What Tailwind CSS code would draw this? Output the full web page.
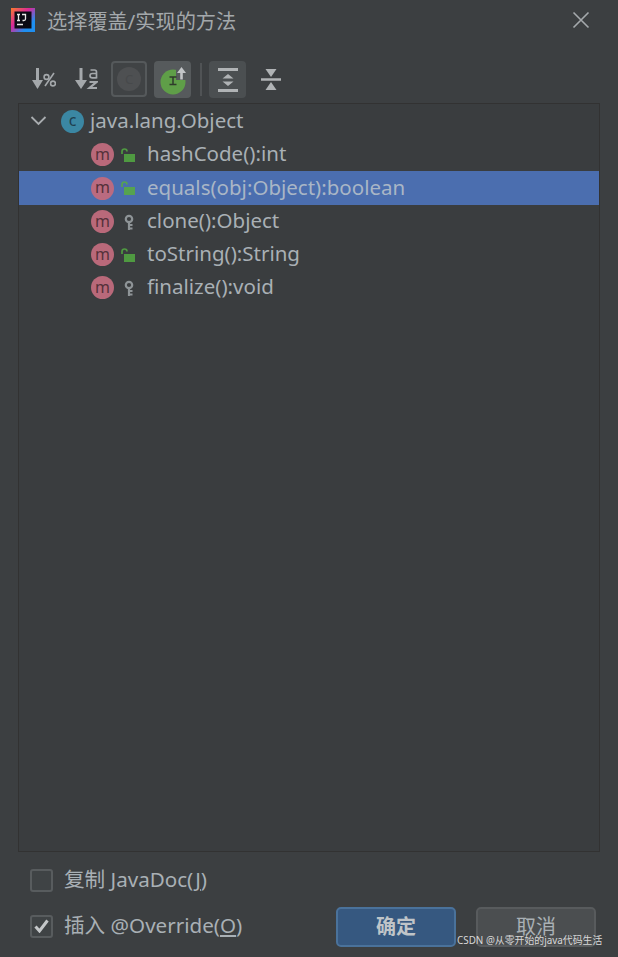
<!DOCTYPE html>
<html>
<head>
    <title>选择覆盖/实现的方法</title>
    <meta name="viewport" content="width=device-width, initial-scale=1.0">
    <script src="https://cdn.jsdelivr.net/npm/@tailwindcss/browser@4"></script>
</head>
<body class="bg-[#3c3f41] text-[#a9b0b5] font-['Noto_Sans','Noto_Sans_CJK_SC',sans-serif]">
    <div class="relative w-[618px] h-[957px] flex flex-col overflow-hidden">
        <!-- Title bar -->
        <header class="h-[42px] flex items-center pl-[11px] pr-[28px]">
            <svg class="w-[24px] h-[24px] mt-[-3px]" viewBox="0 0 24 24">
                <defs>
                    <linearGradient id="logoEdge" x1="0" y1="0" x2="1" y2="1">
                        <stop offset="0" stop-color="#f97a2c"/>
                        <stop offset="0.4" stop-color="#d9289a"/>
                        <stop offset="0.75" stop-color="#1f8ff0"/>
                    </linearGradient>
                </defs>
                <rect width="24" height="24" fill="url(#logoEdge)"/>
                <rect x="3.500" y="3.500" width="17" height="17" fill="#0a0a14"/>
                <path d="M6 6.500h3M7.500 6.500v6M6 12.500h3M11 6.500h3.500v4.500q0 1.500-1.700 1.500h-1.300M6 16.500h6" fill="none" stroke="#e8e8e8" stroke-width="1.300"/>
            </svg>
            <h1 class="ml-[12px] text-[20.200px] leading-none text-[#a3a8ab]">选择覆盖/实现的方法</h1>
            <svg class="ml-auto w-[18px] h-[18px] mt-[-2px]" viewBox="0 0 18 18">
                <path d="M1.500 1.500l15 15M16.500 1.500l-15 15" stroke="#a5a9ac" stroke-width="1.600" fill="none"/>
            </svg>
        </header>

        <!-- Toolbar -->
        <div class="h-[61px] shrink-0 flex items-start pt-[19px] pl-[32px]">
            <!-- sort by percent -->
            <svg class="mt-[7px] w-[24px] h-[22px]" viewBox="0 0 24 22">
                <path d="M5.500 0v14" stroke="#a4a8ab" stroke-width="3"/>
                <path d="M0 12h11l-5.500 9z" fill="#a4a8ab"/>
                <circle cx="14.500" cy="9" r="2.400" fill="none" stroke="#a4a8ab" stroke-width="1.600"/>
                <circle cx="21" cy="15.500" r="2.400" fill="none" stroke="#a4a8ab" stroke-width="1.600"/>
                <path d="M22 5l-9 13" stroke="#a4a8ab" stroke-width="1.600"/>
            </svg>
            <!-- sort alphabetically -->
            <svg class="ml-[19px] mt-[7px] w-[23px] h-[22px]" viewBox="0 0 23 22">
                <path d="M6 0v14" stroke="#a4a8ab" stroke-width="3"/>
                <path d="M0 12h12l-6 9z" fill="#a4a8ab"/>
                <path d="M15.500 2h4q2 0 2 2v6.500M21.500 5.500h-4q-2.500 0-2.500 2.200t2.500 2.200h4" fill="none" stroke="#a4a8ab" stroke-width="1.700"/>
                <path d="M14.500 14h7l-7 6h7.500" fill="none" stroke="#a4a8ab" stroke-width="2.200"/>
            </svg>
            <!-- inherited, toggled with outline -->
            <div class="ml-[13px] w-[36px] h-[36px] rounded-[4px] border-2 border-[#55595b] bg-[#404345] flex items-center justify-center">
                <div class="w-[24px] h-[24px] rounded-full bg-[#4e5052] flex items-center justify-center text-[13px] leading-none text-[#47494b]">C</div>
            </div>
            <!-- interfaces -->
            <div class="ml-[7px] w-[37px] h-[37px] rounded-[4px] bg-[#565a5c] flex items-center justify-center">
                <svg class="w-[30px] h-[30px]" viewBox="0 0 30 30">
                    <circle cx="15" cy="17" r="12.500" fill="#5f9e48"/>
                    <path d="M18 0h12v15H18z" fill="#565a5c"/>
                    <path d="M11.500 12h7M15 12v7.500M11.500 19.500h7" stroke="#2f3a2b" stroke-width="1.500" fill="none"/>
                    <path d="M23.500 14.500V7" stroke="#c2c5c7" stroke-width="2.600"/>
                    <path d="M19 8l4.500-6 4.500 6z" fill="#c2c5c7"/>
                </svg>
            </div>
            <div class="ml-[9px] mt-[2px] w-[2px] h-[33px] bg-[#505355]"></div>
            <!-- expand all -->
            <div class="ml-[7px] w-[37px] h-[37px] rounded-[4px] bg-[#4b4f51] flex items-center justify-center">
                <svg class="w-[20px] h-[24px]" viewBox="0 0 20 24">
                    <path d="M0 1.500h20M0 22.500h20" stroke="#b0b3b5" stroke-width="3"/>
                    <path d="M10 6l5.500 4.500h-11zM10 18l5.500-4.500h-11z" fill="#b0b3b5"/>
                </svg>
            </div>
            <!-- collapse all -->
            <svg class="ml-[15px] mt-[8px] w-[20px] h-[21px]" viewBox="0 0 20 21">
                <path d="M0 10.500h20" stroke="#b0b3b5" stroke-width="2.500"/>
                <path d="M10 8L4.500 0h11zM10 13l-5.500 8h11z" fill="#b0b3b5"/>
            </svg>
        </div>

        <!-- Method tree -->
        <div class="mx-[18px] w-[582px] h-[749px] shrink-0 border border-[#323232] bg-[#3a3d3f] text-[20.500px] leading-none">
            <div class="h-[34px] flex items-center pl-[11px]">
                <svg class="w-[17px] h-[10px]" viewBox="0 0 17 10">
                    <path d="M1.500 1l7 7 7-7" stroke="#a9adb0" stroke-width="1.800" fill="none"/>
                </svg>
                <div class="ml-[14px] w-[23px] h-[23px] rounded-full bg-[#3b87a3] flex items-center justify-center text-[16px] leading-none text-[#1f3f50] pb-[2px]">c</div>
                <span class="ml-[6px] relative top-[-1px]">java.lang.Object</span>
            </div>

            <!-- hashCode -->
            <div class="h-[33px] flex items-center pl-[72px]">
                <div class="w-[23px] h-[23px] rounded-full bg-[#b9697a] flex items-center justify-center text-[16px] leading-none text-[#55313a] pb-[2px]">m</div>
                <svg class="ml-[7px] w-[14px] h-[14px]" viewBox="0 0 14 14">
                    <path d="M1 6V3.500q0-2.500 2.500-2.500T6 3.500" fill="none" stroke="#4f9a41" stroke-width="1.700"/>
                    <rect x="3" y="6" width="11" height="8" fill="#4f9a41"/>
                </svg>
                <span class="ml-[12px] relative top-[-1px]">hashCode():int</span>
            </div>

            <!-- equals, selected row -->
            <div class="h-[34px] flex items-center pl-[72px] bg-[#4b6eaf]">
                <div class="w-[23px] h-[23px] rounded-full bg-[#bb6b80] flex items-center justify-center text-[16px] leading-none text-[#55313a] pb-[2px]">m</div>
                <svg class="ml-[7px] w-[14px] h-[14px]" viewBox="0 0 14 14">
                    <path d="M1 6V3.500q0-2.500 2.500-2.500T6 3.500" fill="none" stroke="#56a34f" stroke-width="1.700"/>
                    <rect x="3" y="6" width="11" height="8" fill="#56a34f"/>
                </svg>
                <span class="ml-[12px] relative top-[-1px] text-[#a9b6c6]">equals(obj:Object):boolean</span>
            </div>

            <!-- clone -->
            <div class="h-[33px] flex items-center pl-[72px]">
                <div class="w-[23px] h-[23px] rounded-full bg-[#b9697a] flex items-center justify-center text-[16px] leading-none text-[#55313a] pb-[2px]">m</div>
                <svg class="ml-[10px] w-[11px] h-[16px]" viewBox="0 0 11 16">
                    <circle cx="5" cy="5" r="3.200" fill="none" stroke="#8e9497" stroke-width="2.200"/>
                    <path d="M5 8v8M5 11h3.500M5 14.500h3.500" stroke="#8e9497" stroke-width="2.200" fill="none"/>
                </svg>
                <span class="ml-[12px] relative top-[-1px]">clone():Object</span>
            </div>

            <!-- toString -->
            <div class="h-[33px] flex items-center pl-[72px]">
                <div class="w-[23px] h-[23px] rounded-full bg-[#b9697a] flex items-center justify-center text-[16px] leading-none text-[#55313a] pb-[2px]">m</div>
                <svg class="ml-[7px] w-[14px] h-[14px]" viewBox="0 0 14 14">
                    <path d="M1 6V3.500q0-2.500 2.500-2.500T6 3.500" fill="none" stroke="#4f9a41" stroke-width="1.700"/>
                    <rect x="3" y="6" width="11" height="8" fill="#4f9a41"/>
                </svg>
                <span class="ml-[12px] relative top-[-1px]">toString():String</span>
            </div>

            <!-- finalize -->
            <div class="h-[33px] flex items-center pl-[72px]">
                <div class="w-[23px] h-[23px] rounded-full bg-[#b9697a] flex items-center justify-center text-[16px] leading-none text-[#55313a] pb-[2px]">m</div>
                <svg class="ml-[10px] w-[11px] h-[16px]" viewBox="0 0 11 16">
                    <circle cx="5" cy="5" r="3.200" fill="none" stroke="#8e9497" stroke-width="2.200"/>
                    <path d="M5 8v8M5 11h3.500M5 14.500h3.500" stroke="#8e9497" stroke-width="2.200" fill="none"/>
                </svg>
                <span class="ml-[12px] relative top-[-1px]">finalize():void</span>
            </div>
        </div>

        <!-- Footer -->
        <footer class="flex-1 flex items-start justify-between pl-[30px] pr-[22px] pt-[16px] text-[20.600px] leading-none">
            <div class="flex flex-col gap-[22px]">
                <label class="h-[24px] flex items-center">
                    <span class="w-[23px] h-[23px] rounded-[3px] border-2 border-[#585c5e] bg-[#3f4345]"></span>
                    <span class="ml-[11px] relative top-[-1px]">复制 JavaDoc(<u class="underline-offset-2">J</u>)</span>
                </label>
                <label class="h-[24px] flex items-center">
                    <span class="w-[23px] h-[23px] rounded-[3px] border-2 border-[#585c5e] bg-[#3f4345] flex items-center justify-center">
                        <svg class="w-[15px] h-[14px]" viewBox="0 0 15 14">
                            <path d="M1.500 7.500l4 4.500L13.500 1.500" stroke="#c4c7c9" stroke-width="3" fill="none"/>
                        </svg>
                    </span>
                    <span class="ml-[11px] relative top-[-1px]">插入 @Override(<u class="underline-offset-2">O</u>)</span>
                </label>
            </div>
            <div class="flex gap-[20px] pt-[39px]">
                <button class="w-[120px] h-[40px] rounded-[5px] border-2 border-[#4a729b] bg-[#365880] text-[20px] font-bold text-[#bfc4c8]">确定</button>
                <button class="w-[120px] h-[40px] rounded-[5px] border-2 border-[#585b5d] bg-[#4b4e50] text-[20px] text-[#a9b0b5]">取消</button>
            </div>
        </footer>

        <!-- Watermark -->
        <span class="absolute left-[457px] top-[934px] text-[9.900px] leading-[13px] text-[#d8d8d8] whitespace-nowrap">CSDN @从零开始的java代码生活</span>
    </div>
</body>
</html>
